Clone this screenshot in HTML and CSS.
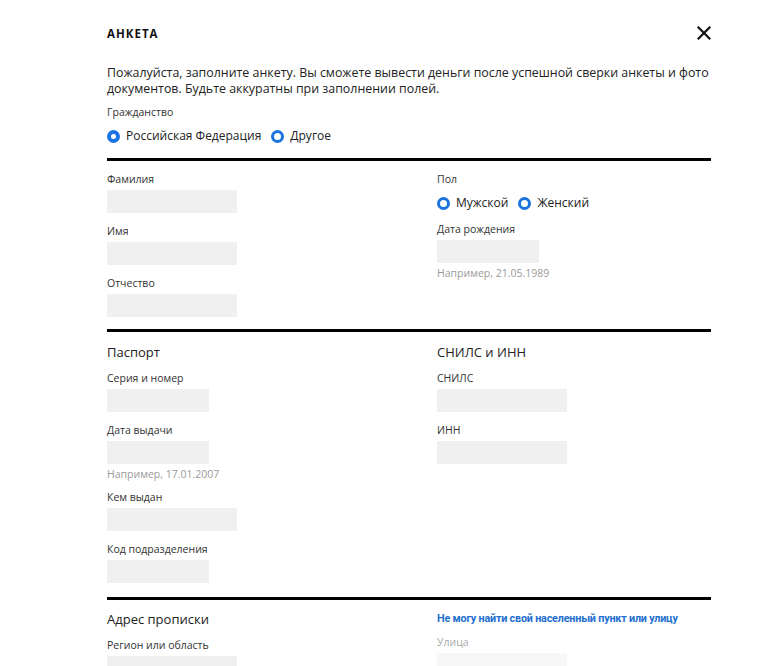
FILE: index.html
```html
<!DOCTYPE html>
<html lang="ru">
<head>
<meta charset="utf-8">
<link rel="stylesheet" href="styles.css">
</head>
<body>
<div class="page">
  <header class="head">
    <h1 class="title">АНКЕТА</h1>
    <span class="close" aria-label="Закрыть">
      <svg width="14" height="14" viewBox="0 0 14 14"><path d="M1.5 1.5 L12.5 12.5 M12.5 1.5 L1.5 12.5" stroke="#111" stroke-width="2.2" stroke-linecap="square" fill="none"/></svg>
    </span>
  </header>
  <p class="intro">Пожалуйста, заполните анкету. Вы сможете вывести деньги после успешной сверки анкеты и фото документов. Будьте аккуратны при заполнении полей.</p>
  <div class="label">Гражданство</div>
  <div class="radios top-radios">
    <span class="radio"><span class="dot checked"></span>Российская Федерация</span>
    <span class="radio"><span class="dot"></span>Другое</span>
  </div>

  <section class="block">
    <div class="col">
      <div class="field"><div class="label">Фамилия</div><div class="input w130"></div></div>
      <div class="field"><div class="label">Имя</div><div class="input w130"></div></div>
      <div class="field"><div class="label">Отчество</div><div class="input w130"></div></div>
    </div>
    <div class="col">
      <div class="field"><div class="label">Пол</div>
        <div class="radios">
          <span class="radio"><span class="dot"></span>Мужской</span>
          <span class="radio"><span class="dot"></span>Женский</span>
        </div>
      </div>
      <div class="field"><div class="label">Дата рождения</div><div class="input w102"></div><div class="hint">Например, 21.05.1989</div></div>
    </div>
  </section>

  <section class="block passport">
    <div class="col">
      <h2 class="sub">Паспорт</h2>
      <div class="field"><div class="label">Серия и номер</div><div class="input w102"></div></div>
      <div class="field"><div class="label">Дата выдачи</div><div class="input w102"></div><div class="hint">Например, 17.01.2007</div></div>
      <div class="field after-hint"><div class="label">Кем выдан</div><div class="input w130"></div></div>
      <div class="field"><div class="label">Код подразделения</div><div class="input w102"></div></div>
    </div>
    <div class="col">
      <h2 class="sub">СНИЛС и ИНН</h2>
      <div class="field"><div class="label">СНИЛС</div><div class="input w130"></div></div>
      <div class="field"><div class="label">ИНН</div><div class="input w130"></div></div>
    </div>
  </section>

  <section class="block last">
    <div class="col">
      <h2 class="sub">Адрес прописки</h2>
      <div class="field"><div class="label">Регион или область</div><div class="input w130"></div></div>
    </div>
    <div class="col">
      <a class="link" href="#">Не могу найти свой населенный пункт или улицу</a>
      <div class="field"><div class="label muted">Улица</div><div class="input w130 faint"></div></div>
    </div>
  </section>
</div>
</body>
</html>
```

FILE: styles.css
```css
* { box-sizing: border-box; }
html, body { margin: 0; padding: 0; background: #fff; }
body {
  font-family: "Open Sans", "Noto Sans", Arial, sans-serif;
  color: #222;
  overflow: hidden;
  height: 666px;
}
.page {
  width: 604px;
  margin-left: 107px;
  padding-top: 24px;
}
.head {
  display: flex;
  justify-content: space-between;
  align-items: center;
  height: 18px;
}
.title {
  margin: 0;
  font-size: 11.5px;
  font-weight: 700;
  letter-spacing: 1px;
  color: #111;
}
.close { display: flex; }
.intro {
  margin: 23px 0 0;
  font-size: 12.4px;
  line-height: 15.5px;
  color: #222;
  width: 612px;
}
.label {
  font-size: 10.5px;
  line-height: 14px;
  color: #333;
}
.intro + .label { margin-top: 9px; }
.radios {
  display: flex;
  align-items: center;
  gap: 10px;
  font-size: 12px;
  line-height: 16px;
  color: #222;
}
.top-radios { margin-top: 9px; padding-bottom: 14px; border-bottom: 3px solid #000; }
.radio { display: flex; align-items: center; gap: 6px; }
.dot {
  width: 13px; height: 13px;
  border-radius: 50%;
  border: 3px solid #1a73e0;
  background: #fff;
}
.dot.checked { border-width: 4.5px; }
.block {
  display: flex;
  border-bottom: 3px solid #000;
  padding: 11px 0 12px;
}
.block.passport { padding-bottom: 14px; }
.block.last { padding-top: 10px; border-bottom: none; }
.col { width: 330px; }
.col + .col { width: 274px; }
.field + .field { margin-top: 11px; }
.field.after-hint { margin-top: 9px; }
.field .label { margin-bottom: 4px; }
.field .radios { margin-top: 9px; margin-bottom: 6px; }
.input {
  height: 23px;
  background: #f0f0f0;
}
.w130 { width: 130px; }
.w102 { width: 102px; }
.hint {
  font-size: 10.5px;
  line-height: 14px;
  margin-top: 3px;
  color: #9a9a9a;
}
.sub {
  margin: 0 0 10px;
  font-size: 13px;
  font-weight: 400;
  line-height: 18px;
  color: #222;
}
.link {
  display: block;
  font-family: Roboto, "Open Sans", sans-serif;
  font-size: 10.8px;
  font-weight: 700;
  line-height: 18px;
  color: #1f6fcf;
  text-decoration: none;
  margin-bottom: 7px;
  letter-spacing: -0.2px;
  white-space: nowrap;
}
.muted { color: #aaa; }
.faint { background: #f7f7f7; }
```
